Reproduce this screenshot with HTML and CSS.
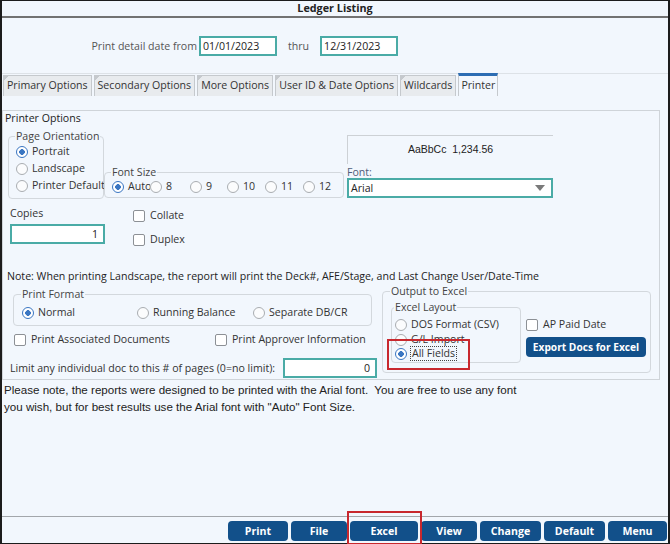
FILE: index.html
```html
<!DOCTYPE html>
<html lang="en">
<head>
    <meta charset="UTF-8">
    <meta name="viewport" content="width=device-width, initial-scale=1.0">
    <title>Ledger Listing</title>
    <link rel="stylesheet" href="styles.css">
</head>
<body>
    <div class="window">
        <div class="titlebar">Ledger Listing</div>

        <div class="daterow">
            <span class="datelabel">Print detail date from</span>
            <span class="field date">01/01/2023</span>
            <span class="thru">thru</span>
            <span class="field date">12/31/2023</span>
        </div>

        <div class="tabs">
            <span class="tab">Primary Options</span>
            <span class="tab">Secondary Options</span>
            <span class="tab">More Options</span>
            <span class="tab">User ID &amp; Date Options</span>
            <span class="tab">Wildcards</span>
            <span class="tab active">Printer</span>
        </div>

        <div class="printbox">
            <div class="boxtitle">Printer Options</div>

            <div class="toparea">
                <fieldset class="group orient">
                    <legend>Page Orientation</legend>
                    <div class="opt"><span class="radio on"></span>Portrait</div>
                    <div class="opt"><span class="radio"></span>Landscape</div>
                    <div class="opt"><span class="radio"></span>Printer Default</div>
                </fieldset>

                <fieldset class="group fontsize">
                    <legend>Font Size</legend>
                    <div class="sizes">
                        <div class="opt"><span class="radio on"></span>Auto</div>
                        <div class="opt"><span class="radio"></span>8</div>
                        <div class="opt"><span class="radio"></span>9</div>
                        <div class="opt"><span class="radio"></span>10</div>
                        <div class="opt"><span class="radio"></span>11</div>
                        <div class="opt"><span class="radio"></span>12</div>
                    </div>
                </fieldset>

                <div class="fontcol">
                    <div class="sample">AaBbCc&nbsp;&nbsp;1,234.56</div>
                    <div class="fontlabel">Font:</div>
                    <div class="field select">
                        <span>Arial</span>
                        <svg width="10" height="6" viewBox="0 0 10 6"><path d="M0 0h10L5 6z" fill="#7a7a7a"/></svg>
                    </div>
                </div>
            </div>

            <div class="copyarea">
                <div class="copies">
                    <div class="copylabel">Copies</div>
                    <div class="field num copyfield">1</div>
                </div>
                <div class="copychecks">
                    <div class="opt"><span class="check"></span>Collate</div>
                    <div class="opt"><span class="check"></span>Duplex</div>
                </div>
            </div>

            <div class="note">Note: When printing Landscape, the report will print the Deck#, AFE/Stage, and Last Change User/Date-Time</div>

            <div class="lowarea">
                <div class="leftcol">
                    <fieldset class="group format">
                        <legend>Print Format</legend>
                        <div class="formats">
                            <div class="opt"><span class="radio on"></span>Normal</div>
                            <div class="opt"><span class="radio"></span>Running Balance</div>
                            <div class="opt"><span class="radio"></span>Separate DB/CR</div>
                        </div>
                    </fieldset>
                    <div class="checks">
                        <div class="opt"><span class="check"></span>Print Associated Documents</div>
                        <div class="opt"><span class="check"></span>Print Approver Information</div>
                    </div>
                    <div class="limit">
                        <span>Limit any individual doc to this # of pages (0=no limit):</span>
                        <span class="field num limitfield">0</span>
                    </div>
                </div>

                <fieldset class="group output">
                    <legend>Output to Excel</legend>
                    <div class="outrow">
                        <fieldset class="group layout">
                            <legend>Excel Layout</legend>
                            <div class="opt"><span class="radio"></span>DOS Format (CSV)</div>
                            <div class="opt"><span class="radio"></span>G/L Import</div>
                            <div class="opt"><span class="radio on"></span><span class="focus">All Fields</span></div>
                        </fieldset>
                        <div class="outside">
                            <div class="opt"><span class="check"></span>AP Paid Date</div>
                            <button class="btn export">Export Docs for Excel</button>
                        </div>
                    </div>
                </fieldset>
            </div>
        </div>

        <div class="hint">
            Please note, the reports were designed to be printed with the Arial font.&nbsp; You are free to use any font<br>
            you wish, but for best results use the Arial font with "Auto" Font Size.
        </div>

        <div class="footer">
            <button class="btn w-print">Print</button>
            <button class="btn w-file">File</button>
            <button class="btn w-excel">Excel</button>
            <button class="btn w-view">View</button>
            <button class="btn w-change">Change</button>
            <button class="btn w-default">Default</button>
            <button class="btn w-menu">Menu</button>
        </div>

        <div class="mark mark-fields"></div>
        <div class="mark mark-excel"></div>
    </div>
</body>
</html>
```

FILE: styles.css
```css
body {
    margin: 0;
    background-color: #fff;
    font-family: "Open Sans", "Noto Sans", sans-serif;
    font-size: 10.6px;
    color: #333;
}

.window {
    position: relative;
    width: 670px;
    height: 544px;
    box-sizing: border-box;
    border: 2px solid #1c1c1c;
    border-top-width: 1px;
    border-bottom-width: 1px;
    background-color: #f2f7fd;
    display: flex;
    flex-direction: column;
}

.titlebar {
    height: 15px;
    line-height: 14px;
    text-align: center;
    font-weight: bold;
    font-size: 10.8px;
    color: #222;
    border-bottom: 2px solid #727272;
}

/* date range */
.daterow {
    display: flex;
    align-items: center;
    height: 20px;
    padding-top: 18px;
    margin-bottom: 17px;
    color: #555;
}

.datelabel {
    width: 195px;
    margin-right: 2px;
    text-align: right;
}

.thru {
    margin: 0 11px 0 11px;
}

.field {
    box-sizing: border-box;
    height: 20px;
    border: 2px solid #4aaba6;
    background-color: #fff;
    padding: 0 2px;
    line-height: 16px;
    color: #222;
}

.date {
    width: 78px;
}

.num {
    text-align: right;
    padding-right: 5px;
}

/* tabs */
.tabs {
    display: flex;
    align-items: flex-end;
    gap: 2px;
    height: 22px;
    padding-left: 1px;
    border-top: 1px solid #dde2e7;
}

.tab {
    height: 21px;
    line-height: 19px;
    padding: 0 3px;
    box-sizing: border-box;
    border: 1px solid #c5c9cd;
    border-bottom: none;
    background-color: #e8ebee;
    background-image: linear-gradient(135deg, #c5c9cd 0 3px, transparent 3px);
    color: #333;
}

.tab.active {
    height: 23px;
    line-height: 19px;
    padding: 0 2px;
    border-top: 3px solid #2c6db3;
    background: #f2f7fd;
}

/* printer options box */
.printbox {
    margin: 14px 8px 0 0;
    border: 1px solid #cfd4d9;
}

.boxtitle {
    line-height: 14px;
    padding-left: 2px;
    color: #222;
}

.group {
    margin: 0;
    min-width: 0;
    border: 1px solid #d3d8dd;
    border-radius: 4px;
    padding: 0;
}

.group legend {
    padding: 0 1px;
    margin-left: -1px;
    line-height: 12px;
    white-space: nowrap;
    color: #444;
}

.opt {
    display: flex;
    align-items: center;
    gap: 4px;
    white-space: nowrap;
    color: #333;
}

.radio {
    flex: none;
    width: 12px;
    height: 12px;
    box-sizing: border-box;
    border: 1px solid #a9adb1;
    border-radius: 50%;
    background-color: #fbfcfd;
}

.radio.on {
    border: 1.5px solid #3a76c2;
    background: radial-gradient(circle, #3a76c2 0 2.6px, #fff 3px);
}

.check {
    flex: none;
    width: 12px;
    height: 12px;
    box-sizing: border-box;
    border: 1px solid #8c9095;
    border-radius: 2px;
    background-color: #fff;
}

.toparea {
    display: flex;
    align-items: flex-end;
    margin-top: 5px;
    padding-left: 5px;
}

.orient {
    width: 96px;
    box-sizing: border-box;
    padding: 1px 0 4px 7px;
}

.orient .opt {
    line-height: 17px;
}

.fontsize {
    width: 240px;
    box-sizing: border-box;
    padding: 0 0 2px 7px;
    margin-bottom: 1px;
}

.sizes {
    display: grid;
    grid-template-columns: 38px 40px 37px 38px 38px auto;
    line-height: 17px;
}

.sizes .opt {
    overflow: hidden;
}

.fontcol {
    width: 206px;
    margin-left: 3px;
    margin-bottom: 1px;
}

.sample {
    height: 29px;
    box-sizing: border-box;
    border-top: 1px solid #cdd1d5;
    border-left: 1px solid #cdd1d5;
    line-height: 27px;
    text-align: center;
    font-family: "Liberation Sans", Arial, sans-serif;
    font-size: 10.5px;
    color: #222;
}

.fontlabel {
    margin-top: 2px;
    line-height: 12px;
    color: #4e5d7a;
}

.select {
    display: flex;
    align-items: center;
    justify-content: space-between;
    padding-right: 6px;
}

/* copies */
.copyarea {
    display: flex;
    margin-top: 7px;
    padding-left: 7px;
}

.copylabel {
    line-height: 14px;
    color: #333;
}

.copyfield {
    width: 95px;
    margin-top: 4px;
}

.copychecks {
    display: flex;
    flex-direction: column;
    gap: 7px;
    margin-left: 28px;
    padding-top: 1px;
}

.copychecks .opt {
    line-height: 17px;
    gap: 5px;
}

.note {
    margin-top: 21px;
    padding-left: 4px;
    line-height: 14px;
    color: #222;
}

/* lower area */
.lowarea {
    display: flex;
    align-items: flex-start;
    margin-top: 2px;
    padding-left: 7px;
    padding-bottom: 1px;
}

.leftcol {
    width: 367px;
    padding-top: 3px;
}

.format {
    width: 359px;
    margin-left: 3px;
    box-sizing: border-box;
    padding: 4px 0 4px 8px;
}

.formats {
    display: grid;
    grid-template-columns: 115px 116px auto;
    line-height: 17px;
}

.checks {
    display: grid;
    grid-template-columns: 201px auto;
    margin: 5px 0 0 4px;
    line-height: 17px;
}

.checks .opt {
    gap: 5px;
}

.limit {
    display: flex;
    align-items: center;
    justify-content: space-between;
    margin-top: 10px;
    color: #333;
}

.limitfield {
    width: 94px;
}

.output {
    width: 269px;
    box-sizing: border-box;
    margin-left: 5px;
    padding: 4px 0 9px 8px;
}

.outrow {
    display: flex;
    align-items: flex-start;
}

.layout {
    width: 130px;
    box-sizing: border-box;
    padding: 4px 0 2px 3px;
}

.layout .opt {
    line-height: 15px;
}

.focus {
    outline: 1px dotted #444;
    line-height: 13px;
    padding: 0 1px;
}

.outside {
    display: flex;
    flex-direction: column;
    align-items: flex-start;
    gap: 5px;
    margin-left: 5px;
    padding-top: 16px;
}

.outside .opt {
    line-height: 15px;
    gap: 5px;
}

.btn {
    height: 20px;
    padding: 0;
    border: none;
    border-radius: 4px;
    background-color: #12508a;
    color: #fff;
    font-family: "Open Sans", "Noto Sans", sans-serif;
    font-weight: bold;
    font-size: 10.6px;
    white-space: nowrap;
}

.export {
    width: 120px;
    font-size: 10.2px;
}

.hint {
    margin-top: 1px;
    padding-left: 2px;
    line-height: 17px;
    font-family: "Liberation Sans", Arial, sans-serif;
    font-size: 11.6px;
    color: #222;
}

/* bottom buttons */
.footer {
    margin-top: auto;
    display: flex;
    justify-content: flex-end;
    gap: 3px;
    padding: 4px 1px 2px 0;
    border-top: 1px solid #a3a7ab;
}

.w-print { width: 60px; }
.w-file { width: 56px; }
.w-excel { width: 68px; }
.w-view { width: 56px; }
.w-change { width: 61px; }
.w-default { width: 61px; }
.w-menu { width: 59px; }

/* red annotation boxes */
.mark {
    position: absolute;
    box-sizing: border-box;
    border: 2px solid #c8282e;
}

.mark-fields {
    left: 385px;
    top: 338px;
    width: 83px;
    height: 31px;
}

.mark-excel {
    left: 345px;
    top: 510px;
    width: 75px;
    height: 34px;
}
```
